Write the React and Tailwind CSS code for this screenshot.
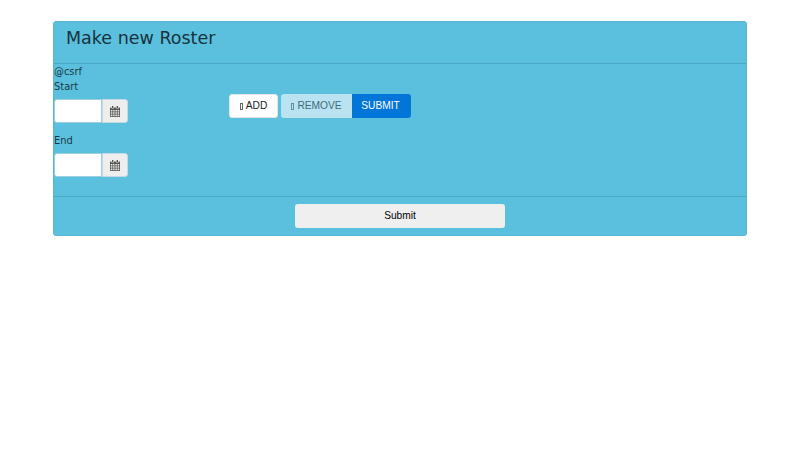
const CalendarIcon = () => (
	<svg width="10" height="11" viewBox="0 0 10 11" fill="#555">
		<path d="M2 0h1.4v2H2zM6.6 0H8v2H6.6z" />
		<path
			fillRule="evenodd"
			d="M0 1.4h1.4v1.2h2.6V1.4h2v1.2h2.6V1.4H10V11H0zM.8 4v1.5h1.6V4zm2.3 0v1.5h1.5V4zm2.3 0v1.5h1.5V4zm2.2 0v1.5h1.6V4zM.8 6.2v1.5h1.6V6.2zm2.3 0v1.5h1.5V6.2zm2.3 0v1.5h1.5V6.2zm2.2 0v1.5h1.6V6.2zM.8 8.4v1.8h1.6V8.4zm2.3 0v1.8h1.5V8.4zm2.3 0v1.8h1.5V8.4zm2.2 0v1.8h1.6V8.4z"
		/>
	</svg>
);

// missing icon-font glyph, shows as a narrow empty box
const MissingGlyph = () => (
	<span className="inline-block w-[3px] h-[7px] mr-[3px] align-[-0.5px] border-[0.5px] border-current opacity-70"></span>
);

const DateField = ({ label }) => (
	<div>
		<div className="h-[15px] leading-[15px]">{label}</div>
		<div className="flex mt-[5px] h-[24px]">
			<input className="w-[48px] h-full bg-white border border-[#9ccfe0] rounded-l-[3px] outline-none" />
			<div className="w-[26px] h-full flex items-center justify-center bg-[#eeeeee] border border-[#c4d9e0] rounded-r-[3px]">
				<CalendarIcon />
			</div>
		</div>
	</div>
);

export default function App() {
	return (
		<div className="min-h-[450px] bg-white pt-[21px] font-['DejaVu_Sans',sans-serif] text-[9.9px] text-[#1a3a47]">
			<div className="w-[694px] h-[215px] mx-auto bg-[#5bc0de] rounded-[3px] border border-[#55b4d1] flex flex-col">
				<div className="h-[42px] border-b border-[#4ba8c4] pl-[12px] pt-[3px] text-[17.5px] leading-[26px] text-[#17323d]">
					Make new Roster
				</div>
				<div className="h-[132px] flex">
					<div className="w-[175px]">
						<div className="h-[15px] leading-[15px]">@csrf</div>
						<DateField label="Start" />
						<div className="mt-[10px]">
							<DateField label="End" />
						</div>
					</div>
					<div className="flex mt-[30px] h-[24px] font-['Liberation_Sans',sans-serif] text-[10.2px]">
						<button className="w-[49px] bg-white rounded-[3px] text-[#212529] border border-[#e6e6e6]">
							<MissingGlyph />ADD
						</button>
						<button className="ml-[3px] w-[71px] bg-[#b9e3f0] rounded-l-[3px] text-[#3d6b7a]">
							<MissingGlyph />REMOVE
						</button>
						<button className="w-[59px] pr-[2px] bg-[#0275d8] rounded-r-[3px] text-white">SUBMIT</button>
					</div>
				</div>
				<div className="flex-1 border-t border-[#4ba8c4] flex justify-center pt-[7px]">
					<button className="w-[210px] h-[24px] bg-[#efefef] rounded-[3px] font-['Liberation_Sans',sans-serif] text-[10.2px] text-black">
						Submit
					</button>
				</div>
			</div>
		</div>
	);
}
